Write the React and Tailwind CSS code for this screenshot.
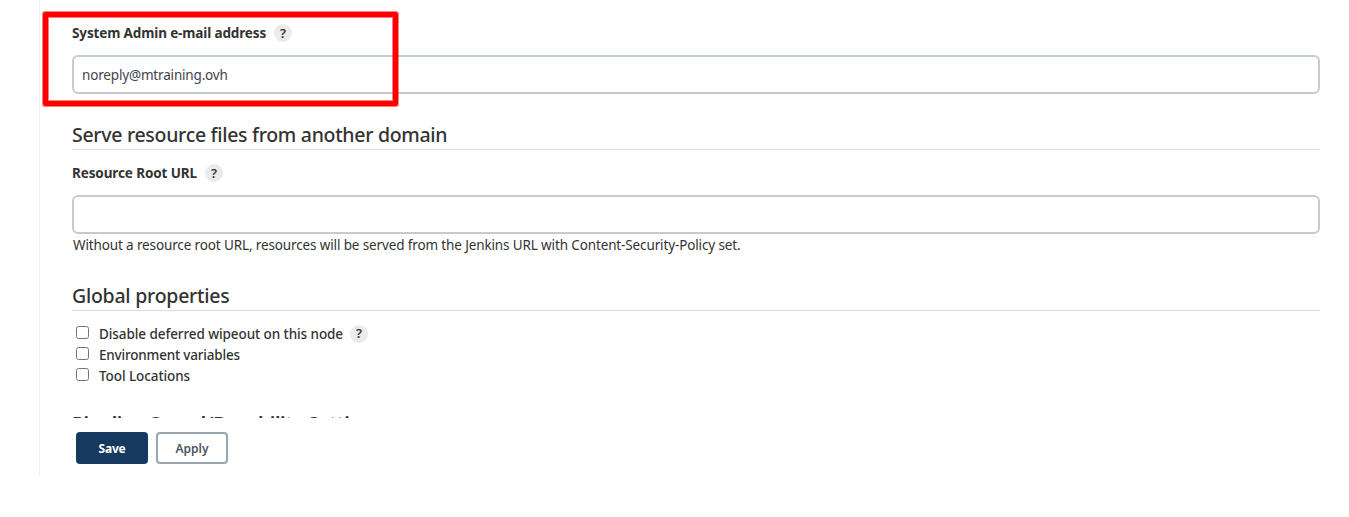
function HelpBadge() {
  return (
    <span className="flex h-[18px] w-[18px] items-center justify-center rounded-full bg-[#ebebeb] text-[13px] leading-none font-semibold text-[#333]">
      ?
    </span>
  );
}

function FieldLabel({ children, className }) {
  return (
    <div className="flex h-[18px] items-center gap-2">
      <label className={`text-[13.5px] leading-[18px] font-bold whitespace-nowrap ${className}`}>{children}</label>
      <HelpBadge />
    </div>
  );
}

function TextInput({ value }) {
  return (
    <input
      defaultValue={value}
      className="block h-[39px] w-full rounded-[6px] border-2 border-[#c3cad1] bg-white px-2 pt-px text-[13.5px] tracking-[-0.17px] text-[#3f444b]"
    />
  );
}

function SectionHeading({ children, className }) {
  return (
    <h2 className={`h-[29px] border-b border-[#dbdfe0] text-[19.5px] leading-[27px] whitespace-nowrap ${className}`}>
      {children}
    </h2>
  );
}

function CheckRow({ children, help, className }) {
  return (
    <div className="flex h-[21px] items-center pl-1">
      <span className="mr-[10px] mb-[3px] h-[13px] w-[13px] rounded-[2.5px] border border-[#767676] bg-white" />
      <label className={`mr-2 pt-px text-[13.5px] leading-[20px] font-medium whitespace-nowrap ${className}`}>{children}</label>
      {help && <HelpBadge />}
    </div>
  );
}

export default function App() {
  return (
    <div className="relative h-[517px] w-full overflow-hidden bg-white pl-[39px] font-['Noto_Sans',sans-serif] text-[#333]">
      <main className="h-[476px] border-l border-[#efefef] pr-[29px] pl-8">
        <div className="h-[418px] overflow-hidden pt-6">
          <FieldLabel className="w-[194px] tracking-[-0.13px]">System Admin e-mail address</FieldLabel>
          <div className="mt-[13px]">
            <TextInput value="noreply@mtraining.ovh" />
          </div>
          <div className="mt-[27px]">
            <SectionHeading className="font-medium tracking-[-0.3px]">Serve resource files from another domain</SectionHeading>
          </div>
          <div className="mt-[14px]">
            <FieldLabel className="w-[125px] tracking-[-0.11px]">Resource Root URL</FieldLabel>
          </div>
          <div className="mt-[13px]">
            <TextInput value="" />
          </div>
          <p className="mt-[1px] h-[21px] pl-px text-[13.5px] leading-[21px] tracking-[-0.13px] whitespace-nowrap">
            Without a resource root URL, resources will be served from the Jenkins URL with Content-Security-Policy set.
          </p>
          <div className="mt-[26px]">
            <SectionHeading className="font-medium tracking-[-0.25px]">Global properties</SectionHeading>
          </div>
          <div className="mt-3">
            <CheckRow help className="w-[243px] tracking-[-0.08px]">Disable deferred wipeout on this node</CheckRow>
            <CheckRow className="tracking-[-0.19px]">Environment variables</CheckRow>
            <CheckRow className="tracking-[-0.08px]">Tool Locations</CheckRow>
          </div>
          <div className="mt-[24px]">
            <SectionHeading className="font-semibold tracking-[-0.37px]">Pipeline Speed/Durability Settings</SectionHeading>
          </div>
        </div>
        <div className="flex gap-2 pt-[14px] pl-1">
          <button className="h-8 w-[72px] rounded-[4px] bg-[#163a5f] pt-px text-[12px] font-bold tracking-[-0.2px] text-white">
            Save
          </button>
          <button className="h-8 w-[72px] rounded-[4px] border-2 border-[#98a4af] bg-white pt-px text-[12px] font-semibold text-[#4d545d]">
            Apply
          </button>
        </div>
      </main>
      <div className="pointer-events-none absolute top-[12px] left-[43px] h-[94px] w-[355px] rounded-[2px] border-[5px] border-[#ff0000] shadow-[0_0_0_1px_rgba(255,0,0,0.5),inset_0_0_0_1px_rgba(255,0,0,0.5)]" />
    </div>
  );
}
